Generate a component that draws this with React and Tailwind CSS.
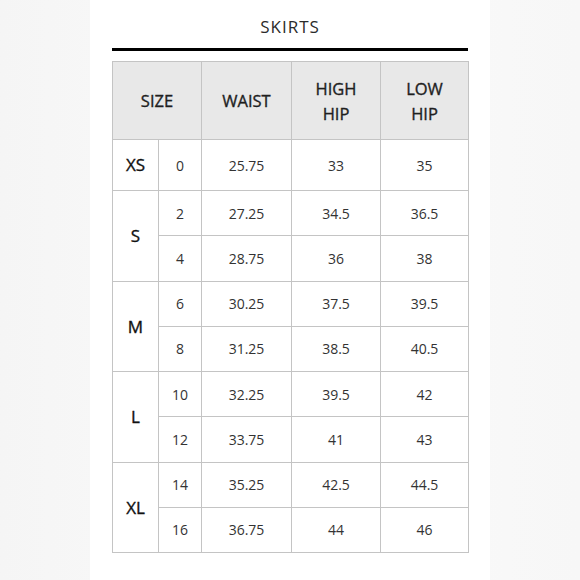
import React from 'react';

const rows = [
    { size: 'XS', items: [['0', '25.75', '33', '35']] },
    { size: 'S', items: [['2', '27.25', '34.5', '36.5'], ['4', '28.75', '36', '38']] },
    { size: 'M', items: [['6', '30.25', '37.5', '39.5'], ['8', '31.25', '38.5', '40.5']] },
    { size: 'L', items: [['10', '32.25', '39.5', '42'], ['12', '33.75', '41', '43']] },
    { size: 'XL', items: [['14', '35.25', '42.5', '44.5'], ['16', '36.75', '44', '46']] },
];

const cell = 'border border-[#c4c4c4] text-center align-middle';
// a touch heavier than regular, lighter than bold
const medium = 'font-normal [-webkit-text-stroke:0.35px_currentColor]';

const App = () => {
    return (
        <div className="w-[580px] h-[580px] flex justify-center bg-gradient-to-r from-[#f5f5f5] via-[#fbfbfb] to-[#f7f7f7] font-['Open_Sans',sans-serif]">
            <div className="w-[400px] h-full bg-white px-[22px] pt-[14px]">
                <h1 className="text-center text-[17px] leading-[26px] tracking-[1px] text-[#2b2b2b] font-normal">SKIRTS</h1>
                <div className="h-[3px] bg-black mt-[8px] mb-[10px]" />
                <table className="w-[356px] table-fixed border-collapse border border-[#b4b4b4]">
                    <colgroup>
                        <col className="w-[46px]" />
                        <col className="w-[43px]" />
                        <col className="w-[90px]" />
                        <col className="w-[89px]" />
                        <col className="w-[88px]" />
                    </colgroup>
                    <thead>
                        <tr className="h-[78px] bg-[#e8e8e8] text-[16.5px] leading-[25px] text-[#1f1f1f]">
                            <th colSpan={2} className={`${cell} ${medium}`}>SIZE</th>
                            <th className={`${cell} ${medium}`}>WAIST</th>
                            <th className={`${cell} ${medium}`}>HIGH<br />HIP</th>
                            <th className={`${cell} ${medium}`}>LOW<br />HIP</th>
                        </tr>
                    </thead>
                    <tbody className="text-[14px] text-[#333]">
                        {rows.map((group) =>
                            group.items.map((r, i) => (
                                <tr key={group.size + i} className={group.size === 'XS' ? 'h-[51px]' : 'h-[45.25px]'}>
                                    {i === 0 && (
                                        <td rowSpan={group.items.length} className={`${cell} text-[17px] text-[#111] ${medium}`}>
                                            {group.size}
                                        </td>
                                    )}
                                    {r.map((v, j) => (
                                        <td key={j} className={cell}>{v}</td>
                                    ))}
                                </tr>
                            ))
                        )}
                    </tbody>
                </table>
            </div>
        </div>
    );
};

export default App;
